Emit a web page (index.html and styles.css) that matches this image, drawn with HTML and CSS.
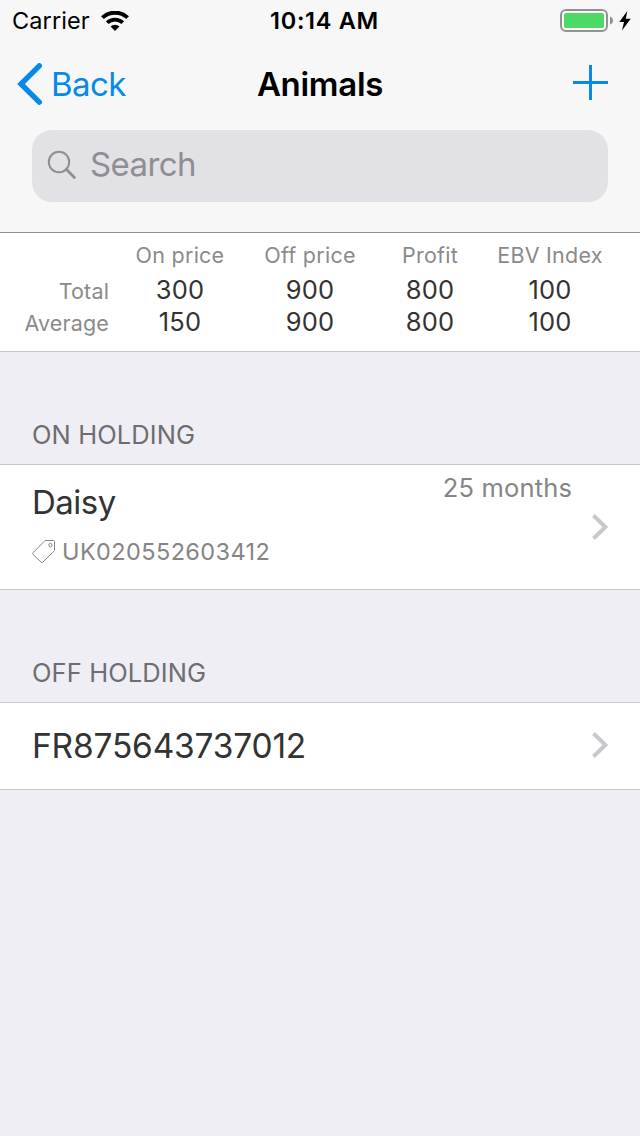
FILE: index.html
```html
<!DOCTYPE html>
<html lang="en">
<head>
  <meta charset="UTF-8">
  <title>Animals</title>
  <link rel="stylesheet" href="styles.css">
</head>
<body>
  <header class="header">
    <div class="status-bar">
      <div class="status-left">
        <span class="carrier">Carrier</span>
        <svg width="28" height="20" viewBox="0 0 28 20">
          <path d="M1.4 6.6 A18.5 18.5 0 0 1 26.6 6.6" fill="none" stroke="#000" stroke-width="4"/>
          <path d="M6.2 11.7 A11.5 11.5 0 0 1 21.8 11.7" fill="none" stroke="#000" stroke-width="3.8"/>
          <path d="M14 20 L9.6 15.6 A6 6 0 0 1 18.4 15.6 Z" fill="#000"/>
        </svg>
      </div>
      <div class="time">10:14 AM</div>
      <div class="status-right">
        <svg width="54" height="24" viewBox="0 0 54 24">
          <rect x="1" y="1" width="46" height="21" rx="5" fill="#fff" stroke="#929292" stroke-width="2"/>
          <rect x="4" y="4" width="40" height="15" rx="2" fill="#4cd964"/>
          <path d="M50 7.5 Q53 8.5 53 11.5 Q53 14.5 50 15.5 Z" fill="#929292"/>
        </svg>
        <svg width="12" height="20" viewBox="0 0 12 20">
          <path d="M8.3 0 L0.3 11 H5 L3 19.5 L11.7 7.8 H6.8 Z" fill="#000"/>
        </svg>
      </div>
    </div>
    <nav class="nav-bar">
      <a class="back">
        <svg width="26" height="42" viewBox="0 0 26 42">
          <path d="M22.3 2.8 L4 21 L22.3 39.2" fill="none" stroke="#058ae8" stroke-width="5.4" stroke-linecap="round"/>
        </svg>
        <span>Back</span>
      </a>
      <h1>Animals</h1>
      <a class="add">
        <svg width="35" height="35" viewBox="0 0 35 35">
          <path d="M17.5 0 V35 M0 17.5 H35" stroke="#058ae8" stroke-width="3"/>
        </svg>
      </a>
    </nav>
    <div class="search">
      <svg width="30" height="30" viewBox="0 0 30 30">
        <circle cx="12" cy="12" r="10.2" fill="none" stroke="#8e8e93" stroke-width="2"/>
        <path d="M19.3 19.3 L27.4 27.4" stroke="#8e8e93" stroke-width="2.8" stroke-linecap="round"/>
      </svg>
      <span>Search</span>
    </div>
  </header>

  <section class="summary">
    <div></div>
    <div class="col-title">On price</div>
    <div class="col-title">Off price</div>
    <div class="col-title">Profit</div>
    <div class="col-title">EBV Index</div>

    <div class="row-title">Total</div>
    <div class="value">300</div>
    <div class="value">900</div>
    <div class="value">800</div>
    <div class="value">100</div>

    <div class="row-title">Average</div>
    <div class="value">150</div>
    <div class="value">900</div>
    <div class="value">800</div>
    <div class="value">100</div>
  </section>

  <h2>ON HOLDING</h2>
  <div class="animal animal-tall">
    <div class="info">
      <div class="name">Daisy</div>
      <div class="tag">
        <svg width="24" height="24" viewBox="0 0 24 24">
          <path d="M13 0.5 L21.5 0.5 Q22.5 0.5 22.5 1.5 L22.5 10.5 L10.8 22.2 Q10 22.9 9.2 22.2 L1 14.4 Q0.2 13.6 1 12.8 Z" fill="none" stroke="#858585" stroke-width="1"/>
          <rect x="16.9" y="3.5" width="3" height="3.4" rx="1.2" fill="none" stroke="#858585" stroke-width="1"/>
        </svg>
        <span>UK020552603412</span>
      </div>
    </div>
    <div class="age">25 months</div>
    <svg width="16" height="26" viewBox="0 0 16 26">
      <path d="M1.5 1.5 L13.5 13 L1.5 24.5" fill="none" stroke="#c7c7cc" stroke-width="4"/>
    </svg>
  </div>

  <h2>OFF HOLDING</h2>
  <div class="animal">
    <div class="info">
      <div class="name number">FR875643737012</div>
    </div>
    <svg width="16" height="28" viewBox="0 0 16 28">
      <path d="M1.5 1.5 L13.5 13 L1.5 24.5" fill="none" stroke="#c7c7cc" stroke-width="4"/>
    </svg>
  </div>
</body>
</html>
```
FILE: styles.css
```css
* {
  box-sizing: border-box;
}
body {
  font-family: Inter, 'Liberation Sans', sans-serif;
  background: #efeef4;
  color: #333;
  margin: 0;
  width: 640px;
  min-height: 1136px;
}
svg {
  display: block;
  flex: none;
}
.header {
  background: #f7f7f7;
  height: 233px;
  border-bottom: 1px solid #8e8e8f;
}
.status-bar {
  display: grid;
  grid-template-columns: 1fr auto 1fr;
  align-items: center;
  height: 40px;
  padding: 1px 10px 0 19px;
  color: #000;
  font-size: 23.5px;
  line-height: 39px;
}
.status-left {
  display: flex;
  align-items: center;
  gap: 11px;
  margin-left: -7px;
}
.carrier {
  letter-spacing: 0.1px;
}
.time {
  font-weight: 600;
  font-size: 23.5px;
  line-height: 38px;
  letter-spacing: 0.7px;
}
.status-right {
  display: flex;
  align-items: center;
  justify-content: flex-end;
  gap: 5px;
  margin-right: -1px;
}
.nav-bar {
  display: grid;
  grid-template-columns: 1fr auto 1fr;
  align-items: center;
  height: 88px;
  padding: 0 32px;
  font-size: 33px;
}
.back {
  display: flex;
  align-items: center;
  gap: 8px;
  margin-left: -15px;
  color: #058ae8;
  letter-spacing: -0.6px;
}
h1 {
  margin: 0;
  color: #000;
  font-size: 33px;
  font-weight: 600;
  letter-spacing: -0.3px;
}
.add {
  justify-self: end;
  padding-bottom: 3px;
}
.search {
  display: flex;
  align-items: center;
  gap: 13px;
  height: 72px;
  margin: 2px 32px 0;
  padding: 0 15px 3px;
  border-radius: 20px;
  background: #e2e1e6;
  color: #8e8e93;
  font-size: 33px;
  letter-spacing: -0.6px;
}
.search span {
  padding-bottom: 2px;
}
.summary {
  display: grid;
  grid-template-columns: 115px 130px 130px 110px 130px;
  grid-template-rows: 33px 32px 32px;
  height: 119px;
  padding-top: 8px;
  background: #fff;
  border-bottom: 1px solid #c8c7cc;
  text-align: center;
}
.col-title, .row-title {
  color: #8a8a8a;
  font-size: 21.5px;
  line-height: 29px;
  letter-spacing: 0.25px;
}
.row-title {
  padding-right: 6px;
  text-align: right;
  line-height: 34px;
  letter-spacing: 0.15px;
}
.value {
  font-size: 25.5px;
  line-height: 32px;
  letter-spacing: 0.2px;
}
h2 {
  margin: 0;
  height: 112px;
  padding: 67px 32px 0;
  color: #6d6d72;
  font-size: 25.5px;
  font-weight: 400;
  line-height: 32px;
  letter-spacing: 0.1px;
}
.animal {
  display: flex;
  align-items: center;
  height: 88px;
  padding: 0 32px;
  background: #fff;
  border-top: 1px solid #c8c7cc;
  border-bottom: 1px solid #c8c7cc;
}
.animal-tall {
  height: 126px;
}
.info {
  flex: 1;
}
.name {
  font-size: 33px;
  line-height: 49px;
  letter-spacing: -0.5px;
}
.number {
  padding-top: 1px;
  font-size: 33.5px;
  letter-spacing: -0.2px;
}
.tag {
  display: flex;
  align-items: center;
  gap: 6px;
  height: 49px;
  color: #858585;
  font-size: 23.5px;
  letter-spacing: 0.4px;
}
.age {
  align-self: flex-start;
  margin-right: 20px;
  color: #858585;
  font-size: 25.5px;
  line-height: 46px;
  letter-spacing: 0.15px;
}
```
